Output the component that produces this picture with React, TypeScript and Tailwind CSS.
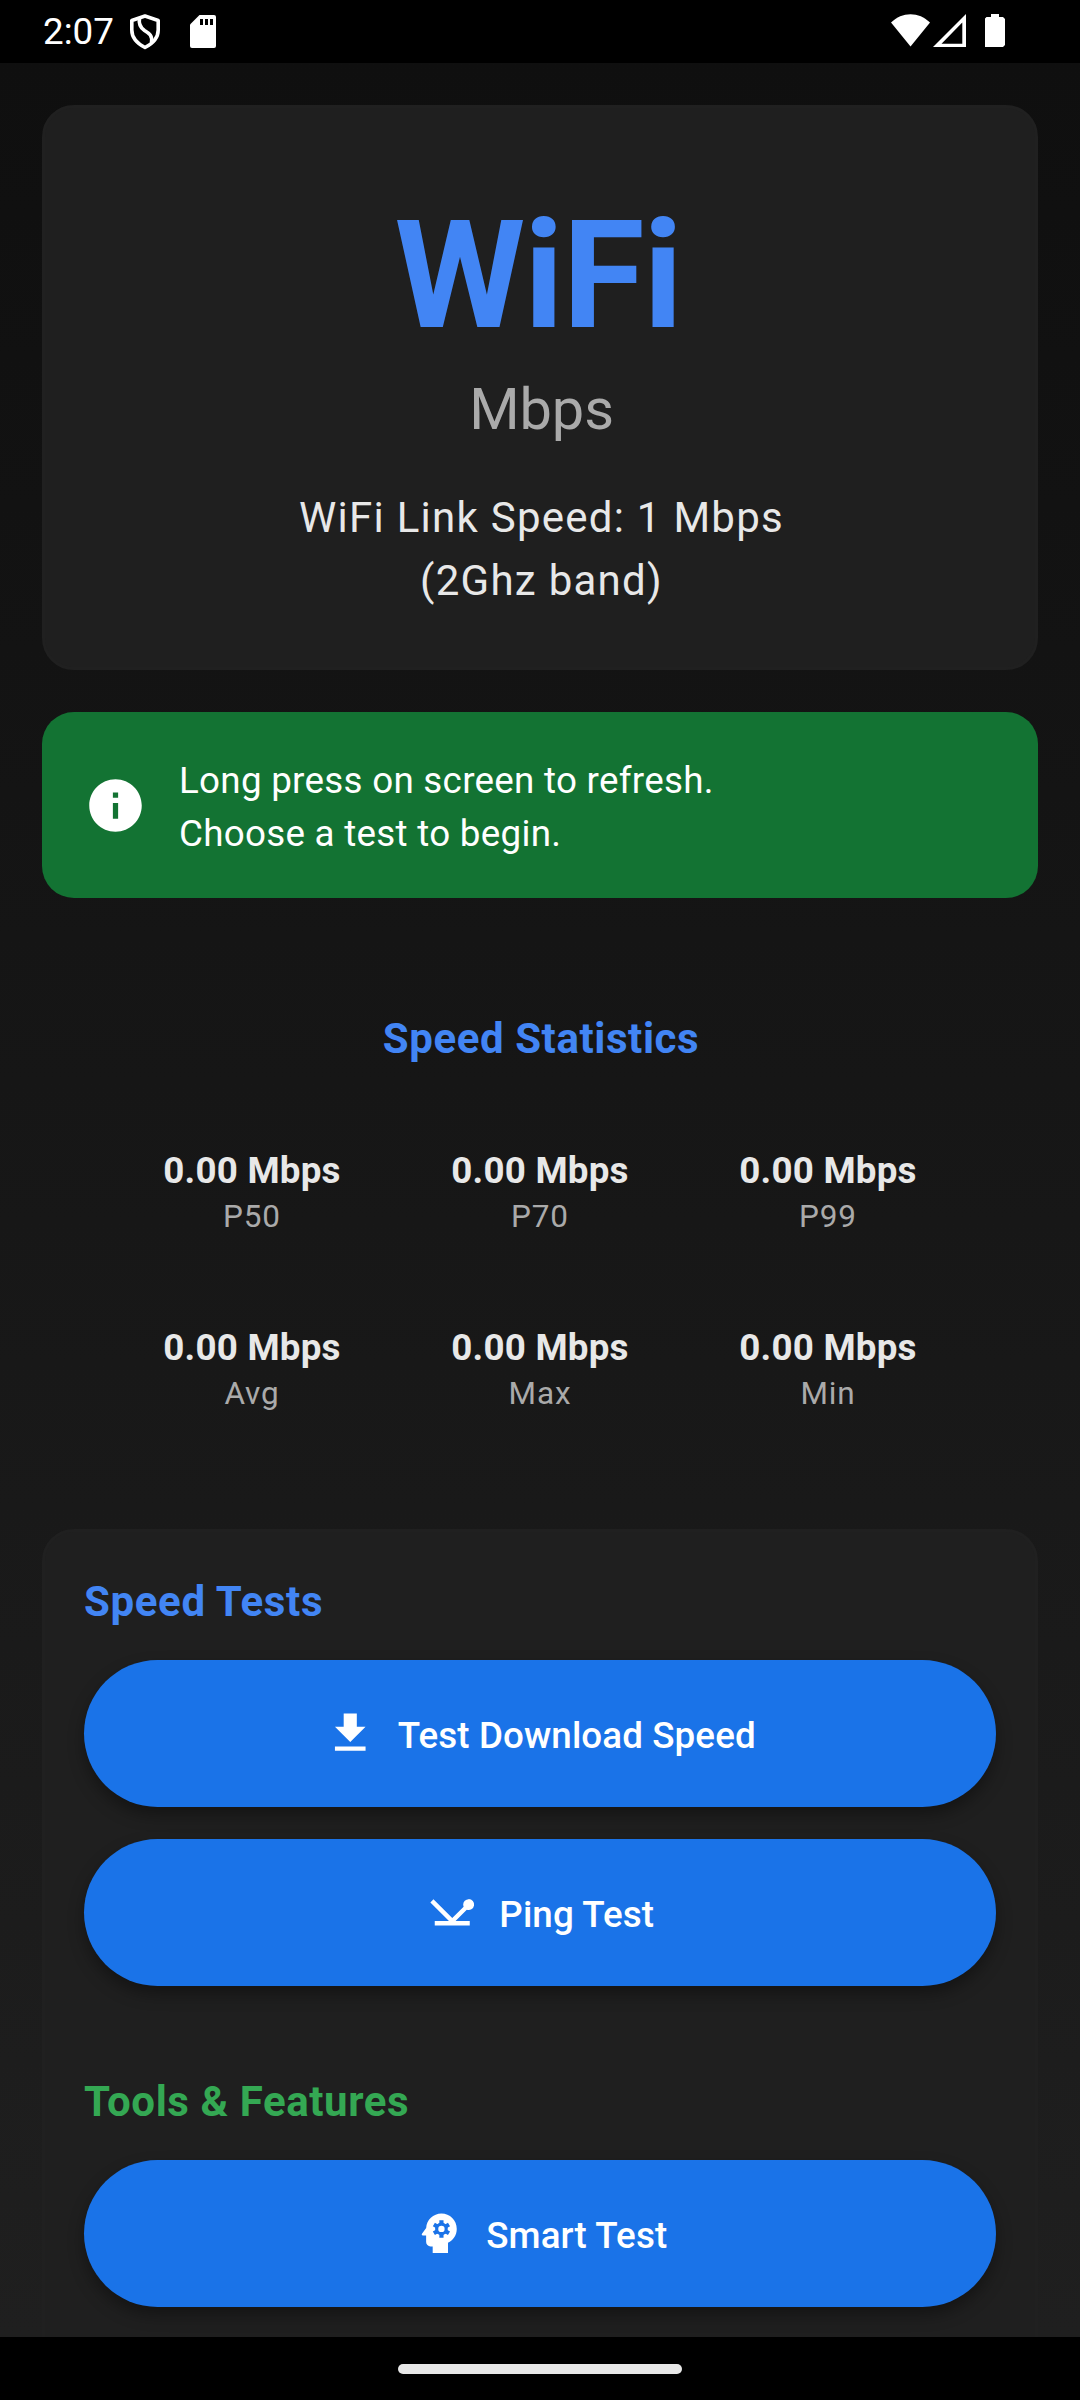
import type { ReactNode } from "react";
import { MdFileDownload, MdInfo, MdNetworkPing } from "react-icons/md";

type Stat = {
  value: string;
  label: string;
};

const stats: Stat[] = [
  { value: "0.00 Mbps", label: "P50" },
  { value: "0.00 Mbps", label: "P70" },
  { value: "0.00 Mbps", label: "P99" },
  { value: "0.00 Mbps", label: "Avg" },
  { value: "0.00 Mbps", label: "Max" },
  { value: "0.00 Mbps", label: "Min" },
];

function StatusBar() {
  return (
    <header className="flex h-[63px] shrink-0 items-start bg-black pl-[43px] pr-[75px] text-white">
      <span className="mt-[10px] text-[36.75px] leading-[43px]">2:07</span>
      <svg className="ml-[15px] mt-[13px] h-[37px] w-[32px]" viewBox="0 0 32 37" fill="none" stroke="currentColor" strokeWidth="3.6">
        <path d="M16 3 29.2 7.5V17c0 8-5.500 13.500-13.200 17.500C8.300 30.500 2.800 25 2.800 17V7.500Z" strokeLinejoin="round" />
        <path d="M10.500 5C9.500 11 11 14.500 15.500 17.500 20.500 20.500 23.500 22.500 22.500 29.500" />
      </svg>
      <svg className="ml-[29px] mt-[15px] h-[33px] w-[26px]" viewBox="0 0 26 33">
        <path d="M9.500 0H24a2 2 0 0 1 2 2v29a2 2 0 0 1-2 2H2a2 2 0 0 1-2-2V9.500Z" fill="currentColor" />
        <path d="M10 4h3v6h-3zM15 4h3v6h-3zM20 4h3v6h-3z" fill="#000" />
      </svg>
      <div className="ml-auto flex pt-[14px]">
        <svg className="h-[33px] w-[39px]" viewBox="0 0 39 33" fill="currentColor">
          <path d="M0 8.500C11-2.600 28-2.600 39 8.500L19.500 32.500Z" />
        </svg>
        <svg className="ml-[3px] h-[33px] w-[33px]" viewBox="0 0 33 33" fill="currentColor" fillRule="evenodd">
          <path d="M33 0v33H0ZM29.300 8.500 8.500 29.700h20.800Z" />
        </svg>
        <svg className="ml-[19px] h-[33px] w-[20px]" viewBox="0 0 20 33" fill="currentColor">
          <path d="M6 0h8v3h4l2 2v26l-2 2H0V4.500L1.500 3H6Z" />
        </svg>
      </div>
    </header>
  );
}

// head profile with a gear inside
function SmartIcon() {
  return (
    <svg className="size-[52.5px]" viewBox="0 0 24 24" fill="currentColor">
      <path d="M13 3C9.250 3 6.200 5.940 6.020 9.640L4.100 12.200c-.25.33-.01.8.4.8H6v3c0 1.100.9 2 2 2h1v3h7v-4.680c2.360-1.120 4-3.530 4-6.320 0-3.870-3.130-7-7-7z" />
      <g stroke="#1a73e8" strokeWidth="1.9">
        <path d="M13 6v8M9.540 8l6.920 4M16.460 8l-6.920 4" />
      </g>
      <circle cx="13" cy="10" r="2.900" fill="#1a73e8" />
      <circle cx="13" cy="10" r="1.450" />
    </svg>
  );
}

function ActionButton(props: { icon: ReactNode; children: ReactNode }) {
  return (
    <button className="flex h-[147px] w-full shrink-0 items-center justify-center gap-[21px] rounded-full bg-[#1a73e8] text-[36.75px] font-medium leading-[52px] tracking-[0.1px] text-white shadow-[0_8px_16px_rgba(0,0,0,0.35)]">
      {props.icon}
      <span className="pt-[4px]">{props.children}</span>
    </button>
  );
}

export default function App() {
  return (
    <div className="flex h-[2400px] w-[1080px] flex-col overflow-hidden bg-black font-[Roboto,sans-serif]">
      <StatusBar />

      <main className="flex h-[2274px] shrink-0 flex-col overflow-hidden bg-linear-to-b from-[#0f0f0f] to-[#1f1f1f] px-[42px] pt-[42px]">
        <section className="flex h-[565px] shrink-0 flex-col items-center rounded-[32px] border-3 border-[#202020] bg-[#1f1f1f] pt-[84px] text-center">
          <h1 className="pr-[4px] text-[149.6px] font-bold leading-[168px] tracking-[-1.25px] text-[#4285f4]">WiFi</h1>
          <p className="mt-[12px] pl-[3px] text-[57.75px] leading-[74px] tracking-[-0.1px] text-[#aaaaaa]">Mbps</p>
          <p className="mt-[40px] pl-[3px] text-[42px] leading-[63px] tracking-[1.26px] text-[#e8e8e8]">
            WiFi Link Speed: 1 Mbps
            <br />
            (2Ghz band)
          </p>
        </section>

        <section className="mt-[42px] flex h-[186px] shrink-0 items-center rounded-[32px] bg-[#137333] pl-[42px] text-white">
          <MdInfo className="size-[63px]" />
          <p className="ml-[32px] pt-[3px] text-[36.75px] leading-[53px] tracking-[0.28px]">
            Long press on screen to refresh.
            <br />
            Choose a test to begin.
          </p>
        </section>

        <section className="flex h-[631px] shrink-0 flex-col px-[66px] pt-[109px]">
          <h2 className="pl-[2px] text-center text-[42px] font-bold leading-[63px] tracking-[0.58px] text-[#4285f4]">
            Speed Statistics
          </h2>
          <div className="mt-[75px] grid grid-cols-3 gap-y-[86px] text-center">
            {stats.map((stat) => (
              <div key={stat.label}>
                <p className="text-[36.75px] font-bold leading-[52px] tracking-[0.22px] text-[#e8e8e8]">{stat.value}</p>
                <p className="text-[31.5px] leading-[39px] tracking-[0.85px] text-[#aaaaaa]">{stat.label}</p>
              </div>
            ))}
          </div>
        </section>

        <section className="flex h-[900px] shrink-0 flex-col rounded-t-[32px] border-3 border-[#202020] bg-[#1f1f1f] px-[39px] pt-[38px]">
          <h2 className="text-[42px] font-bold leading-[63px] tracking-[0.65px] text-[#4285f4]">Speed Tests</h2>
          <div className="mt-[27px] flex flex-col gap-[32px]">
            <ActionButton icon={<MdFileDownload className="size-[52.5px]" />}>Test Download Speed</ActionButton>
            <ActionButton icon={<MdNetworkPing className="size-[52.5px]" />}>Ping Test</ActionButton>
          </div>
          <h2 className="mb-[27px] mt-[84px] text-[42px] font-bold leading-[63px] tracking-[0.58px] text-[#34a853]">
            Tools &amp; Features
          </h2>
          <ActionButton icon={<SmartIcon />}>Smart Test</ActionButton>
        </section>
      </main>

      <footer className="flex h-[63px] shrink-0 justify-center bg-black pt-[27px]">
        <div className="h-[10px] w-[284px] rounded-full bg-[#e8e8e8]" />
      </footer>
    </div>
  );
}
